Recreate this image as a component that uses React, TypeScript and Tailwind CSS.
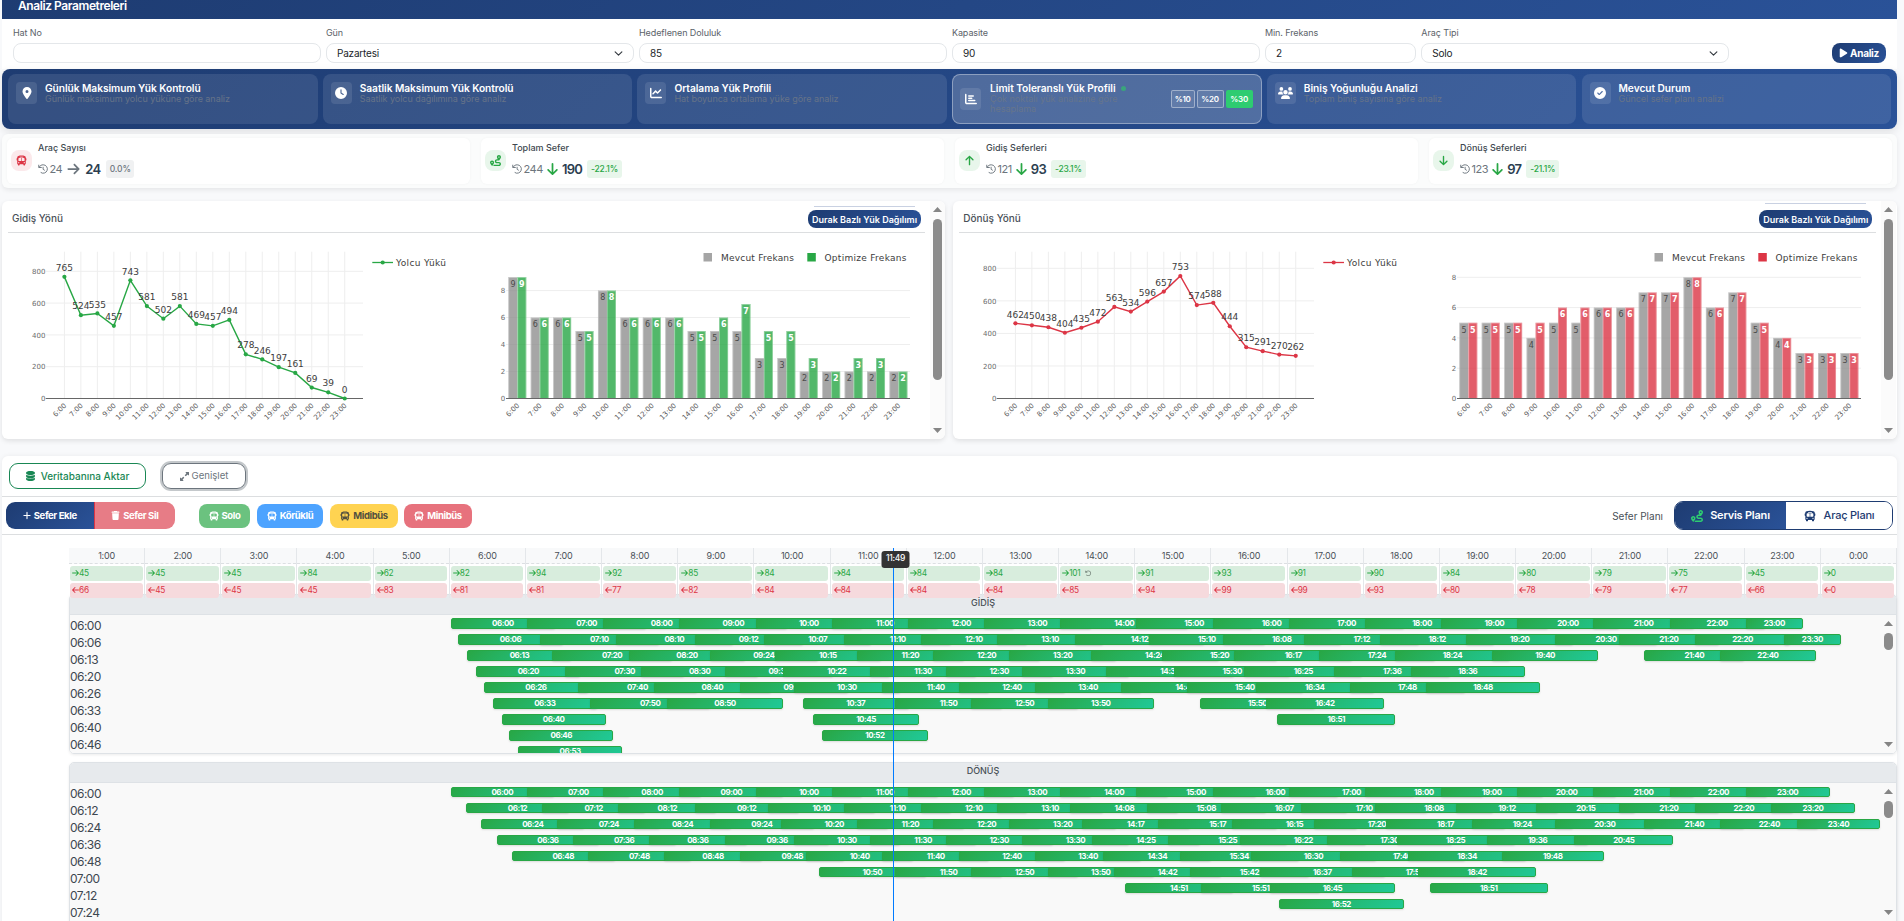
import type { ComponentType, ReactNode } from "react";
import {
  FaArrowDown,
  FaArrowLeft,
  FaArrowRight,
  FaArrowUp,
  FaBus,
  FaChartBar,
  FaChartLine,
  FaCircleCheck,
  FaClock,
  FaDatabase,
  FaLocationDot,
  FaPlay,
  FaPlus,
  FaRotateLeft,
  FaRoute,
  FaTrash,
  FaUpRightAndDownLeftFromCenter,
  FaUsers,
} from "react-icons/fa6";

type Icon = ComponentType<{ className?: string }>;

const HOURS = Array.from({ length: 18 }, (_, i) => `${i + 6}:00`);

/* ---------- parameters form ---------- */

function Chevron() {
  return (
    <svg viewBox="0 0 16 16" className="h-[9px] w-[9px]" fill="none" stroke="#343a40" strokeWidth="2">
      <path d="M2 5l6 6 6-6" strokeLinecap="round" strokeLinejoin="round" />
    </svg>
  );
}

function Field({ label, value, width, select }: { label: string; value?: string; width: string; select?: boolean }) {
  return (
    <div className={width}>
      <div className="h-[16px] text-[9px] leading-[12px] tracking-[-0.01em] text-[#5c636a]">{label}</div>
      <div className="flex h-[20px] items-center justify-between rounded-[8px] border border-[#e4e7ea] bg-white pr-[10px] pl-[10px] text-[10px] leading-none tracking-[-0.02em] text-[#212529]">
        <span>{value}</span>
        {select && <Chevron />}
      </div>
    </div>
  );
}

function Parameters() {
  return (
    <div className="flex h-[50px] bg-white pt-[8px] pr-[11px] pl-[11px]">
      <div className="flex gap-[5.4px]">
        <Field label="Hat No" width="w-[307.6px]" />
        <Field label="Gün" value="Pazartesi" width="w-[307.6px]" select />
        <Field label="Hedeflenen Doluluk" value="85" width="w-[307.6px]" />
        <Field label="Kapasite" value="90" width="w-[307.6px]" />
        <Field label="Min. Frekans" value="2" width="w-[151px]" />
        <Field label="Araç Tipi" value="Solo" width="w-[307.6px]" select />
      </div>
      <button className="mt-[16px] ml-auto flex h-[20px] w-[54px] items-center justify-center gap-[2px] rounded-[8px] bg-linear-135 from-[#1e3c72] to-[#2a5298] text-[10px] leading-none font-bold tracking-[-0.03em] text-white">
        <FaPlay className="h-[10px] w-[9px]" />
        Analiz
      </button>
    </div>
  );
}

/* ---------- analysis tiles ---------- */

const TILES: { icon: Icon; title: string; sub: string; active?: boolean }[] = [
  { icon: FaLocationDot, title: "Günlük Maksimum Yük Kontrolü", sub: "Günlük maksimum yolcu yüküne göre analiz" },
  { icon: FaClock, title: "Saatlik Maksimum Yük Kontrolü", sub: "Saatlik yolcu dağılımına göre analiz" },
  { icon: FaChartLine, title: "Ortalama Yük Profili", sub: "Hat boyunca ortalama yüke göre analiz" },
  { icon: FaChartBar, title: "Limit Toleranslı Yük Profili", sub: "Çok noktalı yük analizine göre hesaplama", active: true },
  { icon: FaUsers, title: "Biniş Yoğunluğu Analizi", sub: "Toplam biniş sayısına göre analiz" },
  { icon: FaCircleCheck, title: "Mevcut Durum", sub: "Güncel sefer planı analizi" },
];

function Tiles() {
  return (
    <div className="flex h-[60px] gap-[5.2px] rounded-[8px] bg-linear-135 from-[#1e3c72] to-[#2a5298] px-[6px] py-[5px] shadow-[0_3px_8px_rgba(0,0,0,0.1)]">
      {TILES.map(({ icon: I, title, sub, active }) => (
        <div
          key={title}
          className={
            active
              ? "flex flex-1 rounded-[8px] border border-white/35 bg-white/20 px-[7px] pt-[13px]"
              : "flex flex-1 rounded-[8px] bg-white/10 px-[8px] pt-[8px]"
          }
        >
          <div className="flex h-[22px] w-[21px] shrink-0 items-center justify-center rounded-[4px] bg-white/10 text-white">
            <I className={I === FaUsers ? "h-[14px] w-[15px]" : "h-[12px] w-[12px]"} />
          </div>
          <div className={active ? "-mt-[6px] ml-[9px] w-[138px]" : "ml-[8px]"}>
            <div className="flex h-[12px] items-center text-[10.2px] leading-[12px] font-semibold tracking-[-0.005em] whitespace-nowrap text-white">
              {title}
              {active && <span className="ml-[5px] h-[5px] w-[5px] shrink-0 rounded-full bg-[#3aa57c]" />}
            </div>
            <div
              className={
                active
                  ? "text-[9px] leading-[10px] text-[#66758c]"
                  : "text-[9px] leading-[10px] tracking-[-0.005em] text-[#667388]"
              }
            >
              {sub}
            </div>
          </div>
          {active && (
            <div className="ml-auto flex gap-[2px] pt-[2px] pr-[1px] text-[8px] leading-none font-semibold tracking-[-0.03em] text-white">
              <span className="flex h-[18px] w-[24px] items-center justify-center rounded-[2px] border border-white/40 bg-white/10">%10</span>
              <span className="flex h-[18px] w-[27px] items-center justify-center rounded-[2px] border border-white/40 bg-white/10">%20</span>
              <span className="flex h-[18px] w-[27px] items-center justify-center rounded-[2px] bg-[#2ecc71]">%30</span>
            </div>
          )}
        </div>
      ))}
    </div>
  );
}

/* ---------- statistics ---------- */

function HistoryIcon() {
  return (
    <svg viewBox="0 0 20 20" className="mr-[1.5px] h-[10px] w-[10px]" fill="none" stroke="#6c757d" strokeWidth="1.9">
      <path d="M1.5 1.5v5.5h6" />
      <path d="M2.2 6.6C4 3.2 7 1.6 10.4 1.6a8.4 8.4 0 1 1-5 15.2" />
      <path d="M10.2 5.6v5l3.4 2.2" />
    </svg>
  );
}

const STATS: { icon: Icon; title: string; before: string; after: string; diff: string; tone: "red" | "green" }[] = [
  { icon: FaBus, title: "Araç Sayısı", before: "24", after: "24", diff: "0.0%", tone: "red" },
  { icon: FaRoute, title: "Toplam Sefer", before: "244", after: "190", diff: "-22.1%", tone: "green" },
  { icon: FaArrowUp, title: "Gidiş Seferleri", before: "121", after: "93", diff: "-23.1%", tone: "green" },
  { icon: FaArrowDown, title: "Dönüş Seferleri", before: "123", after: "97", diff: "-21.1%", tone: "green" },
];

function Stats() {
  return (
    <div className="mt-[5px] flex h-[54px] gap-[11px] rounded-[6px] bg-[#fbfcfc] px-[5px] pt-[4px] pb-[4px] shadow-[0_2px_5px_rgba(0,0,0,0.08)]">
      {STATS.map(({ icon: I, title, before, after, diff, tone }) => (
        <div key={title} className="flex flex-1 rounded-[6px] bg-white pl-[4px] shadow-[0_0_3px_rgba(0,0,0,0.04)]">
          <div
            className={
              tone === "red"
                ? "mt-[12px] flex h-[21px] w-[21px] items-center justify-center rounded-[8px] bg-[#fbe9eb] text-[#dc3545]"
                : "mt-[12px] flex h-[21px] w-[21px] items-center justify-center rounded-[8px] bg-[#e8f6eb] text-[#28a745]"
            }
          >
            <I className="h-[11px] w-[11px]" />
          </div>
          <div className="ml-[6px]">
            <div className="pt-[4px] text-[9px] leading-[12px] font-medium text-[#40484f]">{title}</div>
            <div className="mt-[6px] flex h-[18px] items-center leading-none">
              <HistoryIcon />
              <span className="text-[11px] tracking-[-0.04em] text-[#6c757d]">{before}</span>
              {tone === "red" ? (
                <FaArrowRight className="mx-[5px] h-[14px] w-[13px] text-[#6c757d]" />
              ) : (
                <FaArrowDown className="mx-[3px] h-[14px] w-[13px] text-[#28a745]" />
              )}
              <span className="text-[13px] font-semibold tracking-[-0.06em] text-[#2c3e50]">{after}</span>
              <span
                className={
                  tone === "red"
                    ? "ml-[6px] flex h-[18px] w-[28px] items-center justify-center rounded-[3px] bg-[#f0f1f2] text-[8.5px] font-medium tracking-[-0.01em] text-[#6c757d]"
                    : "ml-[5px] flex h-[18px] items-center rounded-[3px] bg-[#e8f6eb] px-[4px] text-[8.5px] font-medium tracking-[-0.02em] text-[#28a745]"
                }
              >
                {diff}
              </span>
            </div>
          </div>
        </div>
      ))}
    </div>
  );
}

/* ---------- charts ---------- */

function LineChart({ values, color, perUnit, base }: { values: number[]; color: string; perUnit: number; base: number }) {
  const x = (i: number) => 62.4 + i * 16.49;
  const y = (v: number) => base - v * perUnit;
  return (
    <svg width="480" height="200" className="block shrink-0" fontFamily="DejaVu Sans, Verdana, sans-serif">
      {values.map((_, i) => (
        <line key={i} x1={x(i)} x2={x(i)} y1="18.7" y2={base} stroke="#eeeeee" strokeWidth="1" />
      ))}
      {[200, 400, 600, 800].map((v) => (
        <line key={v} x1="43.7" x2="361" y1={y(v)} y2={y(v)} stroke="#eeeeee" strokeWidth="1" />
      ))}
      {[0, 200, 400, 600, 800].map((v) => (
        <text key={v} x="43.4" y={y(v) + 2.7} fontSize="7" textAnchor="end" fill="#6b6b6b">
          {v}
        </text>
      ))}
      <line x1="43.7" x2="361" y1={base} y2={base} stroke="#666" strokeWidth="1" />
      <polyline
        points={values.map((v, i) => `${x(i)},${y(v)}`).join(" ")}
        fill="none"
        stroke={color}
        strokeWidth="1.4"
      />
      {values.map((v, i) => (
        <g key={i}>
          <circle cx={x(i)} cy={y(v)} r="2.1" fill={color} />
          <text x={x(i)} y={y(v) - 5.8} fontSize="9" textAnchor="middle" fill="#3c3c3c">
            {v}
          </text>
          <text
            x={x(i) + 2.5}
            y={base + 7.5}
            fontSize="7"
            textAnchor="end"
            fill="#5a5a5a"
            transform={`rotate(-45 ${x(i) + 2.5} ${base + 7.5})`}
          >
            {HOURS[i]}
          </text>
        </g>
      ))}
      <line x1="370.3" x2="391" y1="29.5" y2="29.5" stroke={color} strokeWidth="1.3" />
      <circle cx="380.7" cy="29.5" r="2.1" fill={color} />
      <text x="394" y="32.5" fontSize="9" textLength="50" fill="#3c3c3c">
        Yolcu Yükü
      </text>
    </svg>
  );
}

function BarChart({
  before,
  after,
  color,
  perUnit,
}: {
  before: number[];
  after: number[];
  color: string;
  perUnit: number;
}) {
  const base = 165.5;
  const x = (i: number) => 24 + 2.3 + i * 22.42;
  return (
    <svg width="448" height="200" className="block shrink-0" fontFamily="DejaVu Sans, Verdana, sans-serif">
      {[2, 4, 6, 8].map((v) => (
        <line key={v} x1="24" x2="428" y1={base - v * perUnit} y2={base - v * perUnit} stroke="#eeeeee" strokeWidth="1" />
      ))}
      {[0, 2, 4, 6, 8].map((v) => (
        <text key={v} x="23.2" y={base - v * perUnit + 2.8} fontSize="7" textAnchor="end" fill="#6b6b6b">
          {v}
        </text>
      ))}
      {before.map((b, i) => {
        const a = after[i];
        return (
          <g key={i}>
            <g opacity="0.8">
              <rect x={x(i)} y={base - b * perUnit} width="9" height={b * perUnit} fill="#909090" />
              <rect x={x(i) + 9} y={base - a * perUnit} width="9" height={a * perUnit} fill={color} />
              <path
                d={`M${x(i) + 0.4} ${base}V${base - b * perUnit + 0.4}h8.6M${x(i) + 9.4} ${base}V${base - a * perUnit + 0.4}h8.2V${base}`}
                fill="none"
                stroke="#fff"
                strokeOpacity="0.4"
                strokeWidth="0.8"
              />
            </g>
            <text x={x(i) + 4.7} y={base - b * perUnit + 9.8} fontSize="8" textAnchor="middle" fill="#4a4a4a">
              {b}
            </text>
            <text x={x(i) + 13.6} y={base - a * perUnit + 9.8} fontSize="8" fontWeight="bold" textAnchor="middle" fill="#fff">
              {a}
            </text>
            <text
              x={x(i) + 11.5}
              y={base + 7.5}
              fontSize="7"
              textAnchor="end"
              fill="#5a5a5a"
              transform={`rotate(-45 ${x(i) + 11.5} ${base + 7.5})`}
            >
              {HOURS[i]}
            </text>
          </g>
        );
      })}
      <line x1="24" x2="428" y1={base} y2={base} stroke="#666" strokeWidth="1" />
      <rect x="221.5" y="20" width="8.5" height="8.5" fill="#a5a5a5" />
      <text x="239" y="27.5" fontSize="9" textLength="73" fill="#3c3c3c">
        Mevcut Frekans
      </text>
      <rect x="325.3" y="20" width="8.5" height="8.5" fill={color} />
      <text x="342.5" y="27.5" fontSize="9" textLength="82" fill="#3c3c3c">
        Optimize Frekans
      </text>
    </svg>
  );
}

function Caret({ down }: { down?: boolean }) {
  return (
    <svg viewBox="0 0 9 5" className="h-[5px] w-[9px]" fill="#858585">
      <path d={down ? "M0 0h9L4.5 5z" : "M0 5h9L4.5 0z"} />
    </svg>
  );
}

function ChartCard({
  title,
  width,
  accent,
  children,
}: {
  title: string;
  width: string;
  accent: string;
  children: ReactNode;
}) {
  return (
    <div className={`flex h-[238px] overflow-hidden rounded-[6px] bg-white shadow-[0_2px_5px_rgba(0,0,0,0.1)] ${width}`}>
      <div className="w-[928px] shrink-0">
        <div className="mr-[5px] ml-[6px] flex h-[32px] items-start justify-between border-b border-[#dcdee0] pr-[4px] pl-[4px]">
          <div className="pt-[11px] text-[10px] leading-[13px] font-medium text-[#495057]">{title}</div>
          <div className="flex flex-col items-center">
            <div className={`w-[101px] border-b border-[#c9d1e2] ${accent}`} />
            <button className="flex h-[18px] w-[113px] items-center justify-center rounded-[8px] bg-linear-135 from-[#1e3c72] to-[#2a5298] text-[9px] leading-none font-semibold whitespace-nowrap text-white">
              Durak Bazlı Yük Dağılımı
            </button>
          </div>
        </div>
        <div className="flex">{children}</div>
      </div>
      <div className="flex w-[15px] shrink-0 flex-col items-center bg-[#fbfbfb] py-[6px]">
        <Caret />
        <div className="mt-[7px] h-[161px] w-[9px] rounded-full bg-[#8b8b8b]" />
        <div className="mt-auto flex">
          <Caret down />
        </div>
      </div>
    </div>
  );
}

/* ---------- timetable ---------- */

const OUT_MIN = [45, 45, 45, 84, 62, 82, 94, 92, 85, 84, 84, 84, 84, 101, 91, 93, 91, 90, 84, 80, 79, 75, 45, 0];
const BACK_MIN = [66, 45, 45, 45, 83, 81, 81, 77, 82, 84, 84, 84, 84, 85, 94, 99, 99, 93, 80, 78, 79, 77, 66, 0];

const OUT_TRIPS = [
  "06:00 07:00 08:00 09:00 10:00 11:00 12:00 13:00 14:00 15:00 16:00 17:00 18:00 19:00 20:00 21:00 22:00 23:00",
  "06:06 07:10 08:10 09:12 10:07 11:10 12:10 13:10 14:12 15:10 16:08 17:12 18:12 19:20 20:30 21:20 22:20 23:30",
  "06:13 07:20 08:20 09:24 10:15 11:20 12:20 13:20 14:24 15:20 16:17 17:24 18:24 19:40 21:40 22:40",
  "06:20 07:30 08:30 09:36 10:22 11:30 12:30 13:30 14:36 15:30 16:25 17:36 18:36",
  "06:26 07:40 08:40 09:48 10:30 11:40 12:40 13:40 14:48 15:40 16:34 17:48 18:48",
  "06:33 07:50 08:50 10:37 11:50 12:50 13:50 15:50 16:42",
  "06:40 10:45 16:51",
  "06:46 10:52",
  "06:53",
];

const BACK_TRIPS = [
  "06:00 07:00 08:00 09:00 10:00 11:00 12:00 13:00 14:00 15:00 16:00 17:00 18:00 19:00 20:00 21:00 22:00 23:00",
  "06:12 07:12 08:12 09:12 10:10 11:10 12:10 13:10 14:08 15:08 16:07 17:10 18:08 19:12 20:15 21:20 22:20 23:20",
  "06:24 07:24 08:24 09:24 10:20 11:20 12:20 13:20 14:17 15:17 16:15 17:20 18:17 19:24 20:30 21:40 22:40 23:40",
  "06:36 07:36 08:36 09:36 10:30 11:30 12:30 13:30 14:25 15:25 16:22 17:30 18:25 19:36 20:45",
  "06:48 07:48 08:48 09:48 10:40 11:40 12:40 13:40 14:34 15:34 16:30 17:40 18:34 19:48",
  "10:50 11:50 12:50 13:50 14:42 15:42 16:37 17:50 18:42",
  "14:51 15:51 16:45 18:51",
  "16:52",
];

const PX_PER_MIN = 76.17 / 60;

function Toolbar() {
  const kinds = [
    { label: "Solo", cls: "w-[51px] bg-[#6bc27f] text-white" },
    { label: "Körüklü", cls: "ml-[7px] w-[66px] bg-[#4da3ff] text-white" },
    { label: "Midibüs", cls: "ml-[7px] w-[68px] bg-[#ffd351] text-[#53503f]" },
    { label: "Minibüs", cls: "ml-[6px] w-[68px] bg-[#e7727d] text-white" },
  ];
  return (
    <>
      <div className="flex h-[41px] border-b border-[#dcdee0] pt-[7px] pl-[7px]">
        <button className="flex h-[26px] w-[137px] items-center justify-center gap-[6px] rounded-[9px] border border-[#198754] text-[10px] leading-none font-medium text-[#198754]">
          <FaDatabase className="h-[10px] w-[9px]" />
          Veritabanına Aktar
        </button>
        <button className="ml-[16px] flex h-[26px] w-[84px] items-center justify-center gap-[3px] rounded-[9px] border border-[#6c757d] text-[9.6px] leading-none text-[#6c757d] shadow-[0_0_0_2px_#c4c8cb]">
          <FaUpRightAndDownLeftFromCenter className="h-[9px] w-[9px]" />
          Genişlet
        </button>
      </div>
      <div className="flex h-[38px] items-center border-b border-[#dcdee0] pr-[4px] pl-[4px]">
        <div className="flex h-[27px] overflow-hidden rounded-[9px] text-[9.5px] leading-none font-bold tracking-[-0.04em] text-white">
          <div className="flex w-[87.5px] items-center justify-center gap-[3px] bg-linear-135 from-[#1e3c72] to-[#2a5298]">
            <FaPlus className="h-[9px] w-[8px]" />
            Sefer Ekle
          </div>
          <div className="flex w-[81.5px] items-center justify-center gap-[3px] border-l border-[#dc3545] bg-[#e77c86]">
            <FaTrash className="h-[9px] w-[9px]" />
            Sefer Sil
          </div>
        </div>
        <div className="ml-[24px] flex">
          {kinds.map((k) => (
            <div
              key={k.label}
              className={`flex h-[24px] items-center justify-center gap-[3px] rounded-[8px] text-[9.5px] leading-none font-bold tracking-[-0.04em] ${k.cls}`}
            >
              <FaBus className="h-[10px] w-[10px]" />
              {k.label}
            </div>
          ))}
        </div>
        <div className="mr-[11px] ml-auto text-[10px] leading-none text-[#495057]">Sefer Planı</div>
        <div className="flex h-[29px] overflow-hidden rounded-[9px] border border-[#1e3c72] text-[11px] leading-none font-medium tracking-[-0.02em]">
          <div className="flex w-[111px] items-center justify-center gap-[7px] bg-linear-135 from-[#1e3c72] to-[#2a5298] font-semibold text-white">
            <FaRoute className="h-[12px] w-[12px] text-[#2ecc71]" />
            Servis Planı
          </div>
          <div className="flex w-[106px] items-center justify-center gap-[8px] bg-white text-[#1e3c72]">
            <FaBus className="h-[12px] w-[12px]" />
            Araç Planı
          </div>
        </div>
      </div>
    </>
  );
}

function HourHeader() {
  return (
    <div className="grid grid-cols-24">
      {OUT_MIN.map((out, i) => (
        <div key={i} className="h-[50px] border-r border-[#e4e7ea]">
          <div className="flex h-[16px] items-center justify-center border-b border-dashed border-[#dcdfe2] bg-[#f8f9fa] pb-[1px] text-[9px] leading-none tracking-[-0.02em] text-[#495057]">
            {`${(i + 1) % 24}:00`}
          </div>
          <div className="mt-[2px] mr-[1.5px] ml-[1px] flex h-[15px] items-center rounded-[3px] bg-[#d8eddd] pb-[1px] pl-[2px] text-[8.3px] leading-none tracking-[-0.03em] text-[#28a745]">
            <FaArrowRight className="h-[8px] w-[7px]" />
            {out}
            {out > 95 && <FaRotateLeft className="ml-[5px] h-[6.5px] w-[6.5px] text-[#7b8a80]" />}
          </div>
          <div className="mt-[2px] mr-[1.5px] ml-[1px] flex h-[15px] items-center rounded-[3px] bg-[#f6dadd] pb-[1px] pl-[2px] text-[8.3px] leading-none tracking-[-0.03em] text-[#dc3545]">
            <FaArrowLeft className="h-[8px] w-[7px]" />
            {BACK_MIN[i]}
          </div>
        </div>
      ))}
    </div>
  );
}

function Direction({
  title,
  trips,
  minutes,
  labels,
  frame,
  bar,
  first,
}: {
  title: string;
  trips: string[];
  minutes: number[];
  labels: string[];
  frame: string;
  bar: string;
  first: number;
}) {
  return (
    <div className={`overflow-hidden rounded-[5px] border border-[#dee2e6] shadow-[0_1px_3px_rgba(0,0,0,0.08)] ${frame}`}>
      <div className="flex h-[20px] justify-center border-b border-[#dee2e6] bg-[#e4e8eb]/90 pt-[2px] text-[9px] leading-[12px] font-medium text-[#495057]">
        {title}
      </div>
      <div className="relative flex h-[200px] bg-[#f9f9f9]">
        <div className="w-[80px] pt-[2px] text-[12px] leading-[17px] tracking-[-0.045em] text-[#3d4750]">
          {labels.map((l, i) => (
            <div key={i}>{l}</div>
          ))}
        </div>
        {trips.flatMap((row, r) =>
          row.split(" ").map((time) => {
            const [h, m] = time.split(":").map(Number);
            return (
              <div
                key={`${r}-${time}`}
                className={`absolute flex justify-center overflow-hidden rounded-[2px] border border-[#28a745] bg-linear-135 from-[#28a745] to-[#20c997] text-[8px] leading-[8px] font-bold tracking-[-0.06em] text-white shadow-[0_1px_2px_rgba(0,0,0,0.12)] ${bar}`}
                style={{
                  left: (h * 60 + m - 60) * PX_PER_MIN,
                  top: first + r * 16,
                  width: minutes[h - 1] * PX_PER_MIN,
                }}
              >
                {time}
              </div>
            );
          }),
        )}
      </div>
    </div>
  );
}

function Scroller({ place }: { place: string }) {
  return (
    <div className={`absolute right-[4px] flex h-[126px] w-[9px] flex-col items-center ${place}`}>
      <Caret />
      <div className="mt-[7px] h-[17px] w-[9px] rounded-full bg-[#8b8b8b]" />
      <div className="mt-auto flex">
        <Caret down />
      </div>
    </div>
  );
}

function Timetable() {
  return (
    <div className="mt-[17px] h-[480px] rounded-t-[6px] bg-white shadow-[0_0_5px_rgba(0,0,0,0.06)]">
      <Toolbar />
      <div className="relative mt-[13px] ml-[67px] w-[1828px]">
        <HourHeader />
        <Direction
          title="GİDİŞ"
          trips={OUT_TRIPS}
          minutes={OUT_MIN}
          labels={["06:00", "06:06", "06:13", "06:20", "06:26", "06:33", "06:40", "06:46"]}
          frame="-mt-[4px] h-[160px]"
          bar="h-[11px]"
          first={3}
        />
        <Direction
          title="DÖNÜŞ"
          trips={BACK_TRIPS}
          minutes={BACK_MIN}
          labels={["06:00", "06:12", "06:24", "06:36", "06:48", "07:00", "07:12", "07:24"]}
          frame="mt-[8px] h-[170px]"
          bar="h-[10px]"
          first={4}
        />
        <div className="absolute top-0 left-[824px] h-[380px] w-px bg-[#007bff]" />
        <div className="absolute top-[3px] left-[813px] flex h-[17px] w-[28px] -translate-x-[0.5px] items-center justify-center rounded-[3px] bg-[#333] pb-[2px] text-[8.5px] leading-none font-medium tracking-[-0.04em] text-white">
          11:49
        </div>
        <Scroller place="top-[73px]" />
        <Scroller place="top-[241px]" />
      </div>
    </div>
  );
}

export default function App() {
  return (
    <div className="h-[921px] w-full overflow-hidden bg-[#f8f9fb] pr-[7px] pl-[2px] font-['Inter','Liberation_Sans',sans-serif]">
      <div className="flex h-[19px] items-start bg-linear-135 from-[#1e3c72] to-[#2a5298] pl-[16px] text-[12px] leading-[11px] font-semibold tracking-[-0.035em] text-white">
        Analiz Parametreleri
      </div>
      <Parameters />
      <Tiles />
      <Stats />
      <div className="mt-[13px] flex gap-[8.3px]">
        <ChartCard title="Gidiş Yönü" width="w-[943px]" accent="mb-[3px] h-[6px]">
          <LineChart
            values={[765, 524, 535, 457, 743, 581, 502, 581, 469, 457, 494, 278, 246, 197, 161, 69, 39, 0]}
            color="#28a745"
            perUnit={0.159}
            base={165.5}
          />
          <BarChart
            before={[9, 6, 6, 5, 8, 6, 6, 6, 5, 5, 5, 3, 3, 2, 2, 2, 2, 2]}
            after={[9, 6, 6, 5, 8, 6, 6, 6, 5, 6, 7, 5, 5, 3, 2, 3, 3, 2]}
            color="#28a745"
            perUnit={13.49}
          />
        </ChartCard>
        <ChartCard title="Dönüş Yönü" width="w-[943.7px]" accent="mb-[6px] h-[3px]">
          <LineChart
            values={[462, 450, 438, 404, 435, 472, 563, 534, 596, 657, 753, 574, 588, 444, 315, 291, 270, 262]}
            color="#dc3545"
            perUnit={0.1627}
            base={165.5}
          />
          <BarChart
            before={[5, 5, 5, 4, 5, 5, 6, 6, 7, 7, 8, 6, 7, 5, 4, 3, 3, 3]}
            after={[5, 5, 5, 5, 6, 6, 6, 6, 7, 7, 8, 6, 7, 5, 4, 3, 3, 3]}
            color="#dc3545"
            perUnit={15.15}
          />
        </ChartCard>
      </div>
      <Timetable />
    </div>
  );
}
